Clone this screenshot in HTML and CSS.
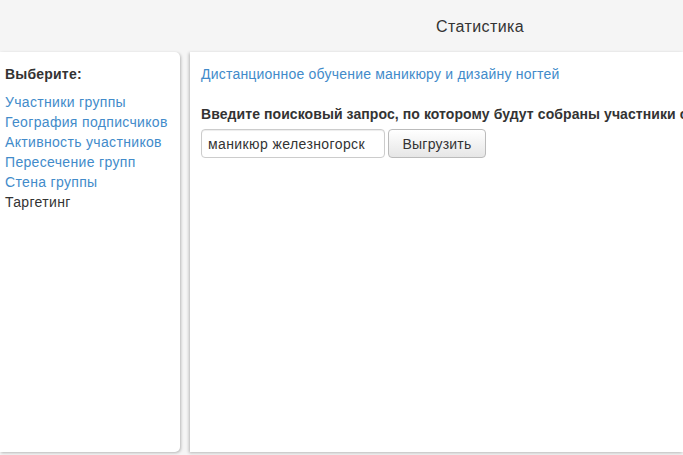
FILE: index.html
```html
<!DOCTYPE html>
<html>
<head>
<meta charset="utf-8">
<link rel="stylesheet" href="styles.css">
</head>
<body>
<header class="topbar"><span class="title">Статистика</span></header>
<div class="layout">
  <aside class="sidebar">
    <div class="sidebar-head">Выберите:</div>
    <ul class="menu">
      <li><a href="#">Участники группы</a></li>
      <li><a href="#">География подписчиков</a></li>
      <li><a href="#">Активность участников</a></li>
      <li><a href="#">Пересечение групп</a></li>
      <li><a href="#">Стена группы</a></li>
      <li class="current">Таргетинг</li>
    </ul>
  </aside>
  <main class="content">
    <a class="group-link" href="#">Дистанционное обучение маникюру и дизайну ногтей</a>
    <div class="label">Введите поисковый запрос, по которому будут собраны участники сообществ:</div>
    <form class="search">
      <input class="query" type="text" value="маникюр железногорск">
      <button class="btn" type="button">Выгрузить</button>
    </form>
  </main>
</div>
</body>
</html>
```
FILE: styles.css
```css
html, body {
  margin: 0;
  padding: 0;
  background: #f5f5f5;
  font-family: "Liberation Sans", Arial, sans-serif;
  font-size: 14px;
  color: #333;
  overflow: hidden;
  height: 455px;
}
.topbar {
  height: 52px;
  display: flex;
  align-items: center;
  padding-left: 436px;
  box-sizing: border-box;
}
.title {
  font-size: 16px;
  letter-spacing: 0.4px;
  color: #333;
  padding-top: 1px;
}
.layout {
  display: flex;
  gap: 10px;
  height: 400px;
}
.sidebar {
  width: 180px;
  flex: none;
  background: #fff;
  border-radius: 0 5px 5px 0;
  box-shadow: 1px 1px 3px rgba(0,0,0,0.25);
  padding: 14px 0 0 5px;
  box-sizing: border-box;
}
.sidebar-head {
  font-weight: bold;
  line-height: 16px;
  margin-bottom: 10px;
  letter-spacing: 0.2px;
}
.menu {
  list-style: none;
  margin: 0;
  padding: 0;
  letter-spacing: 0.33px;
}
.menu li {
  line-height: 20px;
}
.menu a {
  color: #428bca;
  text-decoration: none;
}
.menu .current {
  color: #333;
}
.content {
  flex: 1;
  background: #fff;
  box-shadow: -1px 1px 3px rgba(0,0,0,0.25);
  padding: 12px 0 0 11px;
  white-space: nowrap;
  overflow: hidden;
}
.group-link {
  display: block;
  color: #428bca;
  text-decoration: none;
  line-height: 20px;
  letter-spacing: 0.21px;
}
.label {
  font-weight: bold;
  line-height: 20px;
  margin-top: 20px;
  letter-spacing: 0.08px;
}
.search {
  display: flex;
  gap: 3px;
  margin-top: 5px;
}
.query {
  width: 184px;
  height: 29px;
  box-sizing: border-box;
  border: 1px solid #ccc;
  border-radius: 4px;
  padding: 0 6px;
  font-family: inherit;
  font-size: 14px;
  letter-spacing: 0.4px;
  color: #333;
  box-shadow: inset 0 1px 1px rgba(0,0,0,0.075);
}
.btn {
  width: 98px;
  height: 29px;
  box-sizing: border-box;
  border: 1px solid #bbb;
  border-radius: 4px;
  background: linear-gradient(#fff, #e6e6e6);
  font-family: inherit;
  font-size: 14px;
  letter-spacing: 0.2px;
  color: #333;
  padding: 0;
}
```
